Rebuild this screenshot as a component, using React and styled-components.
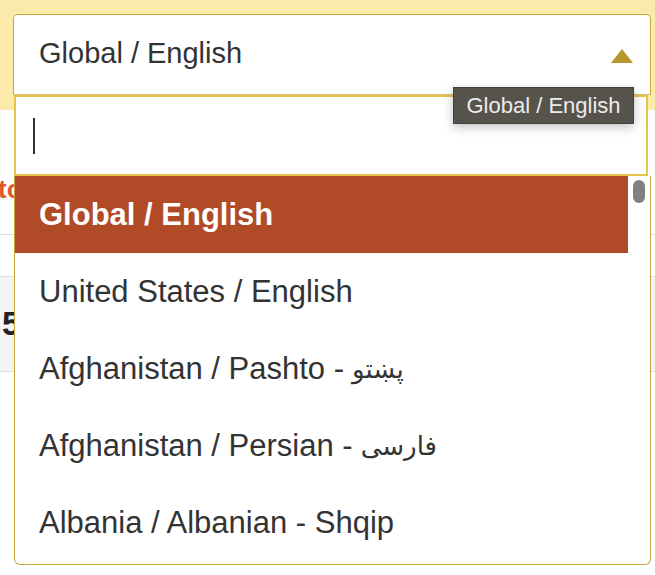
import React from 'react';
import styled, { createGlobalStyle } from 'styled-components';

const GlobalStyle = createGlobalStyle`
  html, body {
    margin: 0;
    padding: 0;
    background: #ffffff;
    font-family: "Liberation Sans", Arial, "DejaVu Sans", sans-serif;
  }
`;

const Page = styled.div`
  position: relative;
  width: 655px;
  height: 575px;
  overflow: hidden;
  background: #fff;
`;

const Banner = styled.div`
  height: 110px;
  background: #fbeaa9;
`;

const TeaserRow = styled.div`
  height: 125px;
  display: flex;
  align-items: flex-start;
  padding-top: 64px;
  box-sizing: border-box;
  border-bottom: 1px solid #dedede;
  span {
    margin-left: -2px;
    font-size: 26px;
    font-weight: 700;
    line-height: 30px;
    color: #e0552b;
  }
`;

const Spacer = styled.div`
  height: 41px;
  border-bottom: 1px solid #dedede;
`;

const StatRow = styled.div`
  height: 94px;
  background: #f4f4f4;
  border-bottom: 1px solid #dedede;
  display: flex;
  align-items: center;
  span {
    margin-left: 2px;
    font-size: 33px;
    font-weight: 700;
    color: #222;
  }
`;

const Dropdown = styled.div`
  position: absolute;
  left: 13px;
  top: 14px;
  width: 638px;
  display: flex;
  flex-direction: column;
`;

const Select = styled.div`
  height: 81px;
  box-sizing: border-box;
  border: 1px solid #c9a63c;
  border-bottom-color: #d8c27a;
  border-radius: 5px 5px 0 0;
  background: #fff;
  display: flex;
  align-items: center;
  justify-content: space-between;
  padding: 0 17px 3px 25px;
  font-size: 29px;
  color: #333;
`;

const Arrow = styled.span`
  width: 0;
  height: 0;
  border-left: 11px solid transparent;
  border-right: 11px solid transparent;
  border-bottom: 14px solid #b8962e;
  margin-top: 5px;
`;

const Search = styled.div`
  height: 81px;
  margin: 0 3px 0 1px;
  box-sizing: border-box;
  border: 2px solid #e6c34a;
  background: #fff;
  display: flex;
  align-items: center;
  padding-left: 17px;
`;

const Caret = styled.span`
  width: 2px;
  height: 36px;
  background: #333;
`;

const List = styled.div`
  position: relative;
  height: 389px;
  margin-left: 1px;
  box-sizing: border-box;
  border: 1px solid #c9a63c;
  border-top: none;
  border-radius: 0 0 6px 6px;
  background: #fff;
  overflow: hidden;
  padding-right: 22px;
`;

const Option = styled.div`
  height: 77px;
  display: flex;
  align-items: center;
  padding-left: 24px;
  font-size: 31px;
  color: ${p => (p.$active ? '#fff' : '#333')};
  background: ${p => (p.$active ? '#b14a26' : 'transparent')};
  font-weight: ${p => (p.$active ? 700 : 400)};
  white-space: nowrap;
`;

const Native = styled.span`
  font-family: "DejaVu Sans", sans-serif;
  font-size: 26px;
  margin-left: 8px;
`;

const Thumb = styled.div`
  position: absolute;
  right: 5px;
  top: 4px;
  width: 12px;
  height: 23px;
  border-radius: 6px;
  background: #808080;
`;

const Tooltip = styled.div`
  position: absolute;
  left: 453px;
  top: 87px;
  width: 181px;
  height: 37px;
  box-sizing: border-box;
  background: #56534c;
  border: 1px solid #44413b;
  box-shadow: 0 3px 10px rgba(0, 0, 0, 0.25);
  color: #ececec;
  font-size: 22px;
  display: flex;
  align-items: center;
  justify-content: center;
`;

const options = [
  { label: 'Global / English', active: true },
  { label: 'United States / English' },
  { label: 'Afghanistan / Pashto -', native: 'پښتو' },
  { label: 'Afghanistan / Persian -', native: 'فارسی' },
  { label: 'Albania / Albanian - Shqip' },
];

export default function App() {
  return (
    <Page>
      <GlobalStyle />
      <Banner />
      <TeaserRow><span>to</span></TeaserRow>
      <Spacer />
      <StatRow><span>5</span></StatRow>
      <Dropdown>
        <Select>
          Global / English
          <Arrow />
        </Select>
        <Search>
          <Caret />
        </Search>
        <List>
          {options.map(o => (
            <Option key={o.label} $active={o.active}>
              {o.label}
              {o.native && <Native dir="rtl">{o.native}</Native>}
            </Option>
          ))}
          <Thumb />
        </List>
      </Dropdown>
      <Tooltip>Global / English</Tooltip>
    </Page>
  );
}
